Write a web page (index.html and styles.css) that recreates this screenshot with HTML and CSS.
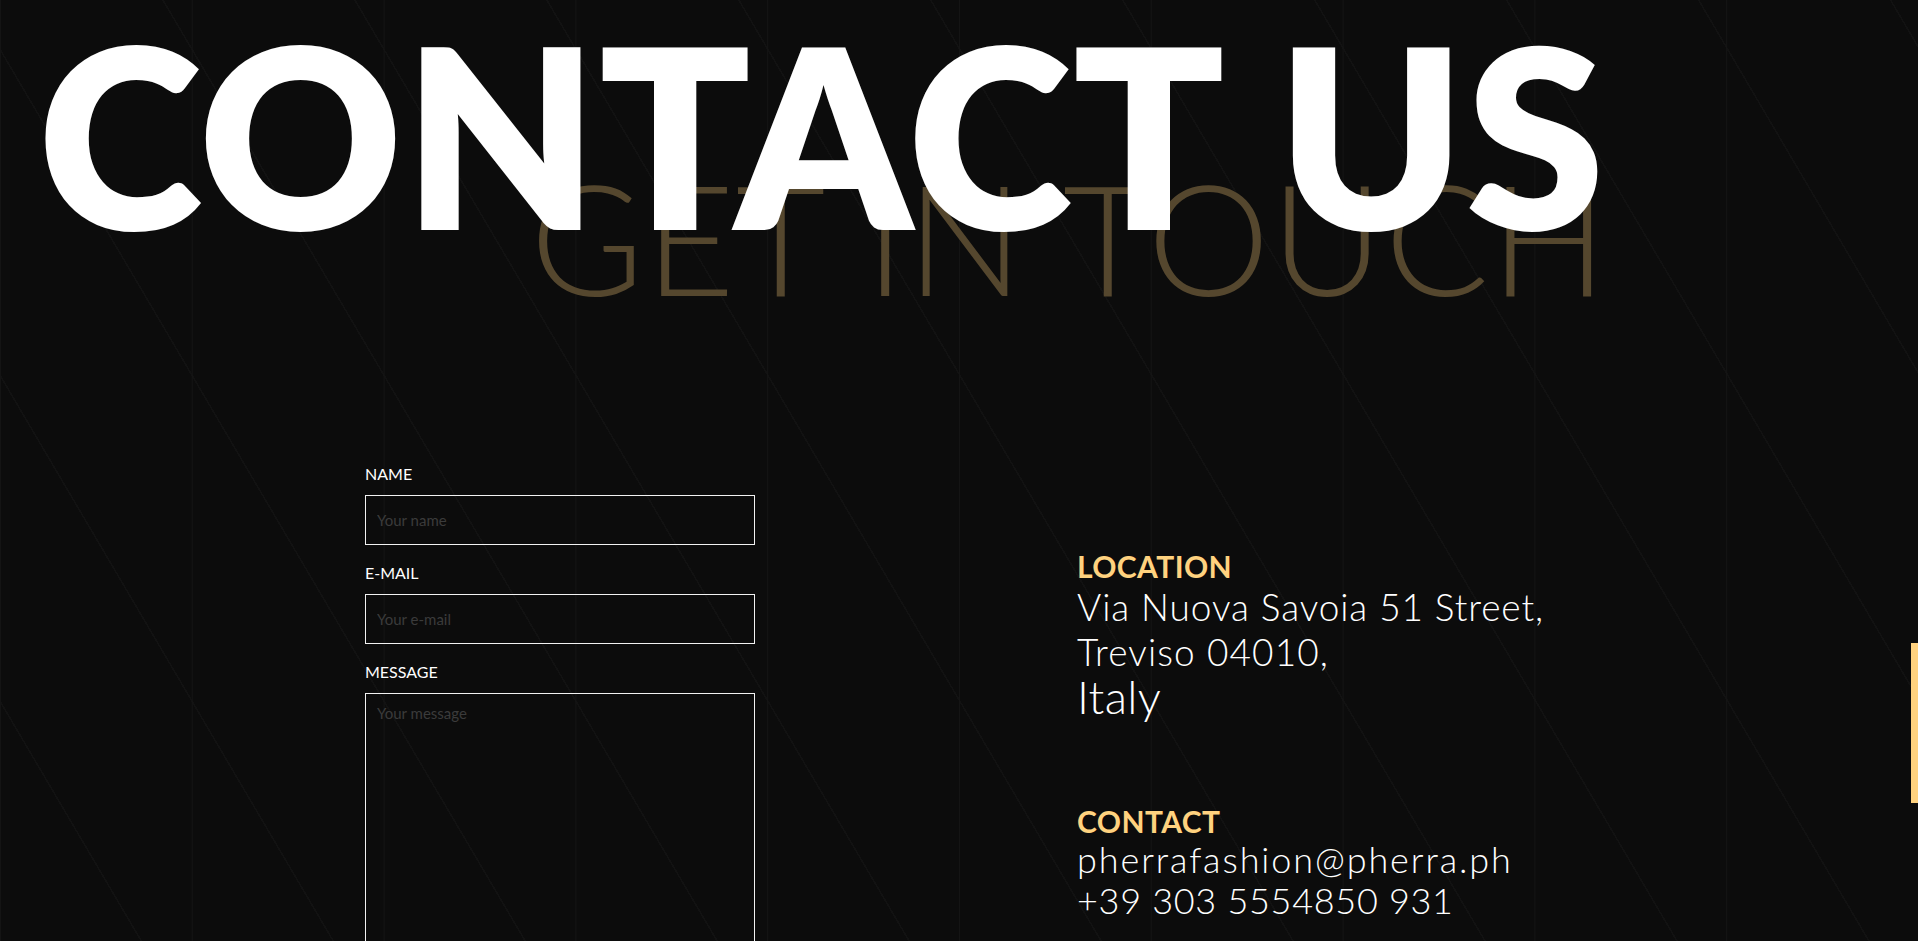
FILE: index.html
```html
<!DOCTYPE html>
<html lang="en">
<head>
<meta charset="utf-8">
<title>Contact Us</title>
<link rel="stylesheet" href="styles.css">
</head>
<body>
<div class="page">
  <header class="hero">
    <h1 class="hero-title">CONTACT US</h1>
    <h2 class="hero-sub">GET IN TOUCH</h2>
  </header>
  <main class="content">
    <form class="form">
      <div class="field">
        <label class="field-label" for="name">NAME</label>
        <input class="field-input" id="name" type="text" placeholder="Your name">
      </div>
      <div class="field">
        <label class="field-label" for="email">E-MAIL</label>
        <input class="field-input" id="email" type="email" placeholder="Your e-mail">
      </div>
      <div class="field">
        <label class="field-label" for="message">MESSAGE</label>
        <textarea class="field-input field-area" id="message" placeholder="Your message"></textarea>
      </div>
    </form>
    <section class="info">
      <div class="info-block">
        <h3 class="info-title">LOCATION</h3>
        <p class="info-line">Via Nuova Savoia 51 Street,</p>
        <p class="info-line info-mid">Treviso 04010,</p>
        <p class="info-line info-big">Italy</p>
      </div>
      <div class="info-block info-contact">
        <h3 class="info-title">CONTACT</h3>
        <p class="info-line info-small info-mail">pherrafashion@pherra.ph</p>
        <p class="info-line info-small">+39 303 5554850 931</p>
      </div>
    </section>
  </main>
  <div class="scroll-bar"></div>
</div>
</body>
</html>
```
FILE: styles.css
```css
html, body {
  margin: 0;
  padding: 0;
}
body {
  background: #0c0c0c;
  font-family: "Lato", "Liberation Sans", sans-serif;
  color: #fff;
}
.page {
  position: relative;
  height: 100vh;
  overflow: hidden;
  background-color: #0c0c0c;
  background-image:
    linear-gradient(90deg, #141414 0, #141414 1px, transparent 1px),
    repeating-linear-gradient(59.5deg, transparent 0, transparent 121px, #121212 121px, #121212 122.5px, transparent 122.5px, transparent 165.4px);
  background-size: 191.8px 100%, 100% 100%;
  background-repeat: repeat-x, no-repeat;
}
.hero {
  display: flex;
  flex-direction: column;
}
.hero-title {
  position: relative;
  z-index: 2;
  margin: 8px 0 0 38px;
  font-family: "Lato", sans-serif;
  font-weight: 800;
  font-size: 250px;
  line-height: 250px;
  letter-spacing: 1.2px;
  color: #fff;
  white-space: nowrap;
}
.hero-sub {
  position: relative;
  z-index: 1;
  margin: -99px 0 0 530px;
  font-family: "Lato", sans-serif;
  font-weight: 300;
  font-size: 155px;
  line-height: 155px;
  letter-spacing: 1px;
  color: #55472e;
  white-space: nowrap;
}
.content {
  display: flex;
  padding: 150px 0 0 365px;
}
.form {
  display: flex;
  flex-direction: column;
  width: 390px;
}
.field {
  display: flex;
  flex-direction: column;
  margin-bottom: 18px;
}
.field-label {
  font-size: 16px;
  line-height: 20px;
  font-weight: 400;
  margin-bottom: 11px;
  color: #fff;
}
.field-input {
  box-sizing: border-box;
  width: 390px;
  height: 50px;
  border: 1px solid #f2f2f2;
  background: transparent;
  padding: 0 11px;
  font-family: "Lato", sans-serif;
  font-size: 15px;
  color: #ddd;
  outline: none;
}
.field-input::placeholder {
  color: #3b3b3b;
}
.field-area {
  height: 320px;
  padding: 10px 11px;
  line-height: 18px;
  resize: none;
}
.info {
  display: flex;
  flex-direction: column;
  margin: 84px 0 0 322px;
}
.info-title {
  margin: 0;
  font-size: 30px;
  line-height: 36px;
  font-weight: 700;
  letter-spacing: 0.4px;
  color: #ffd27f;
}
.info-line {
  margin: 0;
  font-size: 37px;
  line-height: 45px;
  font-weight: 300;
  letter-spacing: 0.9px;
  color: #fff;
}
.info-mid {
  letter-spacing: 1.1px;
}
.info-big {
  font-size: 46px;
  line-height: 46px;
  letter-spacing: 0.3px;
}
.info-contact {
  margin-top: 83px;
}
.info-small {
  font-size: 36px;
  line-height: 41px;
  letter-spacing: 0.7px;
}
.info-mail {
  letter-spacing: 1.9px;
}
.scroll-bar {
  position: absolute;
  right: 0;
  top: 643px;
  width: 7px;
  height: 160px;
  background: #ffd27f;
}
```
